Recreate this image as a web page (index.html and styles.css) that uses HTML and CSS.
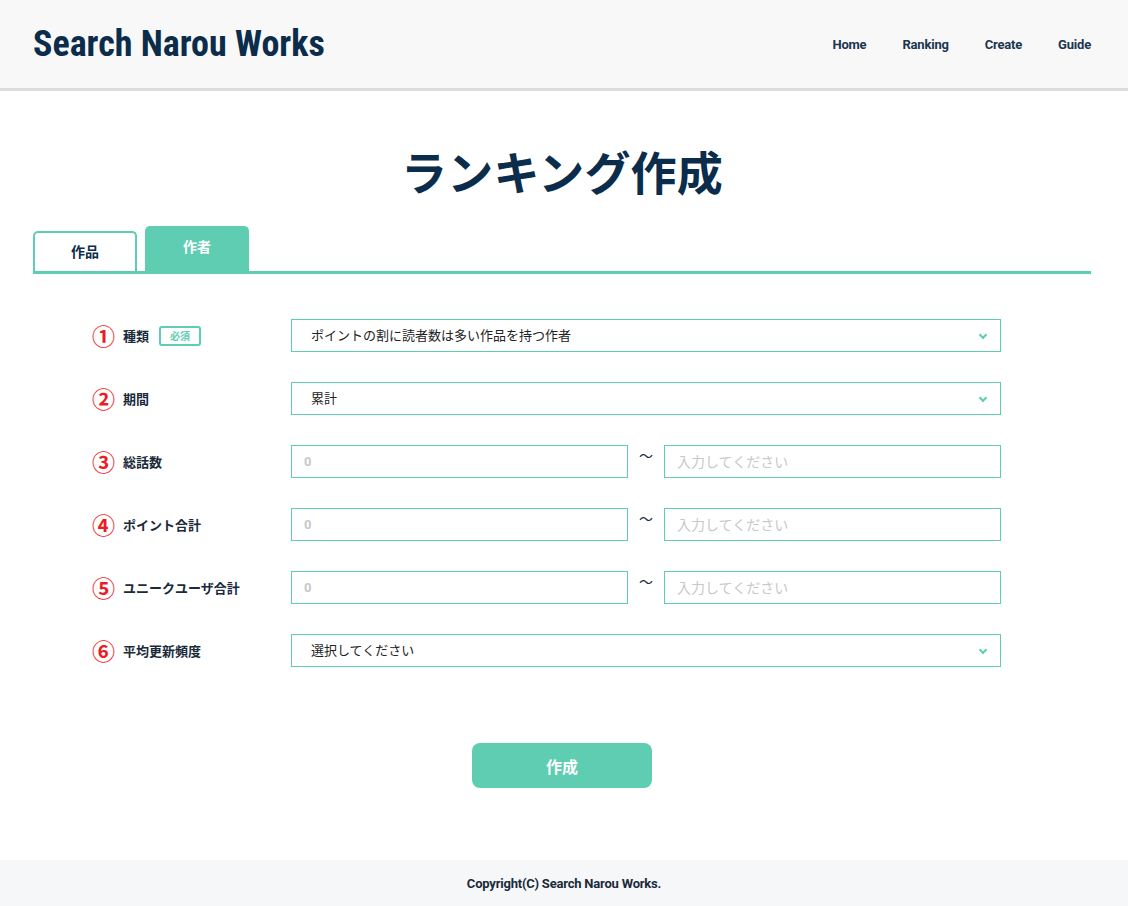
FILE: index.html
```html
<!DOCTYPE html>
<html lang="ja">
<head>
<meta charset="utf-8">
<title>Search Narou Works</title>
<link rel="stylesheet" href="styles.css">
</head>
<body>
<header class="site-header">
  <h1 class="logo">Search Narou Works</h1>
  <nav class="nav">
    <a class="nav-link">Home</a>
    <a class="nav-link">Ranking</a>
    <a class="nav-link">Create</a>
    <a class="nav-link">Guide</a>
  </nav>
</header>
<main class="main">
  <h2 class="page-title">ランキング作成</h2>
  <div class="tabs">
    <div class="tab">作品</div>
    <div class="tab tab-active">作者</div>
  </div>
  <form class="form">
    <div class="row">
      <div class="label"><span class="num">①</span><span class="label-text">種類</span><span class="req">必須</span></div>
      <div class="field select"><span class="select-text">ポイントの割に読者数は多い作品を持つ作者</span><span class="chev"></span></div>
    </div>
    <div class="row">
      <div class="label"><span class="num">②</span><span class="label-text">期間</span></div>
      <div class="field select"><span class="select-text">累計</span><span class="chev"></span></div>
    </div>
    <div class="row">
      <div class="label"><span class="num">③</span><span class="label-text">総話数</span></div>
      <div class="range"><div class="field input"><span class="zero">0</span></div><span class="tilde">〜</span><div class="field input"><span class="ph">入力してください</span></div></div>
    </div>
    <div class="row">
      <div class="label"><span class="num">④</span><span class="label-text">ポイント合計</span></div>
      <div class="range"><div class="field input"><span class="zero">0</span></div><span class="tilde">〜</span><div class="field input"><span class="ph">入力してください</span></div></div>
    </div>
    <div class="row">
      <div class="label"><span class="num">⑤</span><span class="label-text">ユニークユーザ合計</span></div>
      <div class="range"><div class="field input"><span class="zero">0</span></div><span class="tilde">〜</span><div class="field input"><span class="ph">入力してください</span></div></div>
    </div>
    <div class="row">
      <div class="label"><span class="num">⑥</span><span class="label-text">平均更新頻度</span></div>
      <div class="field select"><span class="select-text">選択してください</span><span class="chev"></span></div>
    </div>
    <div class="actions"><button type="button" class="btn">作成</button></div>
  </form>
</main>
<footer class="footer">Copyright(C) Search Narou Works.</footer>
</body>
</html>
```
FILE: styles.css
```css
* { box-sizing: border-box; }
body {
  margin: 0;
  font-family: "Noto Sans CJK JP", "Noto Sans", sans-serif;
  color: #0d2c48;
  background: #fff;
}
.site-header {
  height: 91px;
  background: #f8f8f8;
  border-bottom: 3px solid #dcdcdc;
  display: flex;
  align-items: center;
  justify-content: space-between;
  padding: 0 37px 0 33px;
}
.logo {
  margin: 0;
  font-family: Roboto, sans-serif;
  font-stretch: condensed;
  font-weight: 700;
  font-size: 36px;
  letter-spacing: 0;
  color: #0b2c4a;
}
.nav { display: flex; gap: 36px; }
.nav-link {
  font-family: Roboto, sans-serif;
  font-weight: 700;
  font-size: 13px;
  color: #1b3550;
  letter-spacing: -0.2px;
}
.main { padding: 0 37px 0 33px; }
.page-title {
  margin: 55px 0 0;
  height: 80px;
  text-align: center;
  font-size: 46px;
  font-weight: 700;
  line-height: 48px;
  color: #0b2c4a;
  letter-spacing: 0.2px;
}
.tabs {
  display: flex;
  align-items: flex-end;
  gap: 8px;
  border-bottom: 3px solid #5ecdb1;
  height: 48px;
}
.tab {
  width: 104px;
  height: 40px;
  border: 2px solid #5ecdb1;
  border-bottom: 0;
  border-radius: 5px 5px 0 0;
  display: flex;
  align-items: center;
  justify-content: center;
  font-size: 14px;
  font-weight: 700;
  color: #0b2c4a;
  padding-bottom: 2px;
}
.tab-active {
  height: 45px;
  background: #5ecdb1;
  color: #fff;
  padding-bottom: 7px;
}
.form { padding: 45px 0 0 60px; }
.row {
  display: flex;
  align-items: center;
  height: 33px;
  margin-bottom: 30px;
}
.label {
  width: 198px;
  display: flex;
  align-items: center;
}
.num {
  color: #ec1c24;
  font-size: 23px;
  width: 30px;
  margin-left: -1px;
  font-weight: 700;
  line-height: 1;
}
.label-text {
  font-size: 13px;
  font-weight: 700;
  color: #1a2a3a;
  margin-left: 1px;
}
.req {
  margin-left: 10px;
  border: 2px solid #5ecdb1;
  border-radius: 3px;
  color: #5ecdb1;
  font-size: 10px;
  font-weight: 700;
  padding: 0 9px;
  height: 20px;
  line-height: 16px;
}
.field {
  border: 1px solid #5ecdb1;
  height: 33px;
  display: flex;
  align-items: center;
  background: #fff;
}
.select {
  width: 710px;
  padding: 0 14px 0 19px;
  justify-content: space-between;
  font-size: 13px;
  color: #222;
}
.select-text { margin-top: -3px; }
.chev {
  width: 6px;
  height: 6px;
  border-right: 2px solid #5ecdb1;
  border-bottom: 2px solid #5ecdb1;
  transform: rotate(45deg);
  margin-top: -2px;
}
.range { display: flex; align-items: center; }
.input { width: 337px; padding: 0 12px; }
.zero { font-family: Roboto, sans-serif; font-weight: 700; font-size: 13px; color: #c8c8c8; }
.ph { font-size: 14px; color: #c8c8c8; margin-top: -2px; }
.tilde {
  width: 36px;
  text-align: center;
  font-size: 14px;
  color: #1a2a3a;
  margin-top: -14px;
}
.actions {
  display: flex;
  justify-content: center;
  padding: 46px 0 0 0;
  margin-left: -60px;
}
.btn {
  width: 180px;
  height: 45px;
  border: 0;
  border-radius: 8px;
  background: #5ecdb1;
  color: #fff;
  font-family: "Noto Sans CJK JP", sans-serif;
  font-size: 16px;
  font-weight: 700;
}
.footer {
  margin-top: 72px;
  height: 46px;
  background: #f6f7f9;
  display: flex;
  align-items: center;
  justify-content: center;
  font-family: Roboto, sans-serif;
  font-weight: 700;
  font-size: 13px;
  color: #1a2a3a;
  letter-spacing: -0.2px;
}
```
